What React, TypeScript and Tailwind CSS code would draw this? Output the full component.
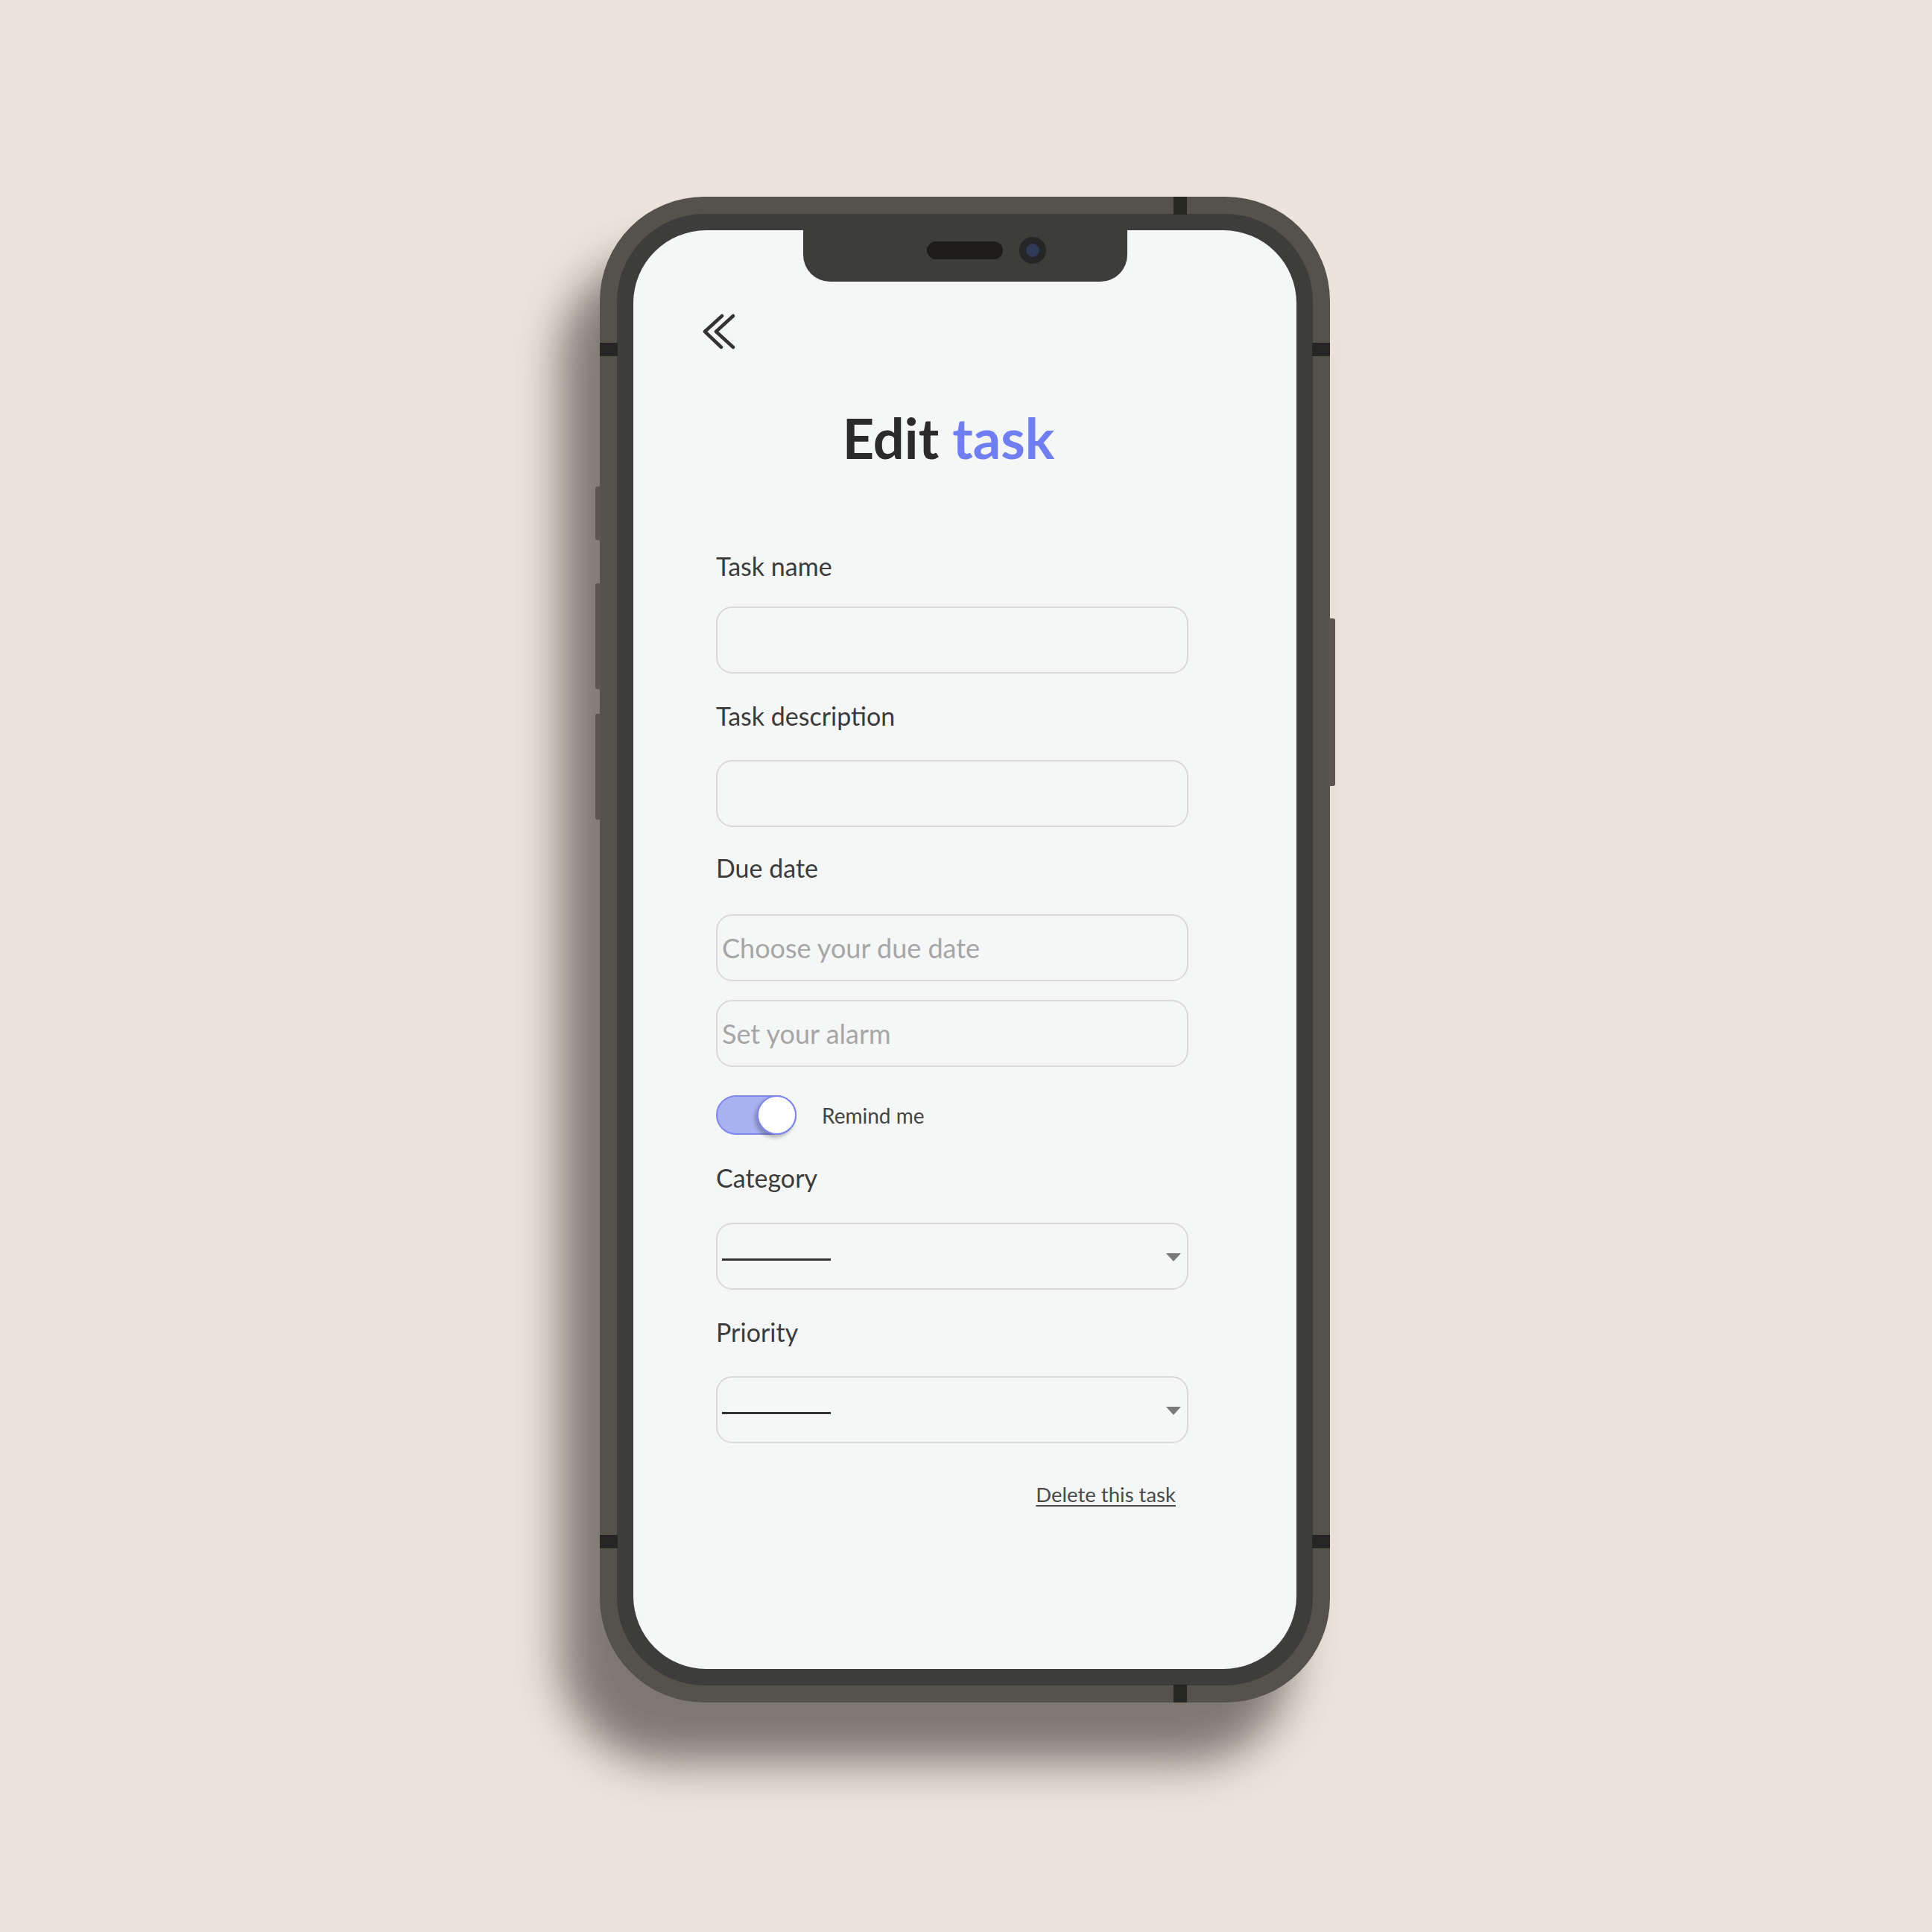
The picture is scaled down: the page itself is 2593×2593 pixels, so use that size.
import React from "react";

const BackIcon = () => (
  <svg width="44" height="48" viewBox="0 0 44 48" fill="none" stroke="#333333" strokeWidth="4.5" strokeLinecap="round" strokeLinejoin="round">
    <path d="M26 3 L3 24 L25 45" />
    <path d="M41 3 L18 24 L41 45" />
  </svg>
);

const Label = ({ children, className = "" }: { children: React.ReactNode; className?: string }) => (
  <div className={`text-[34px] leading-none text-[#3b3b3b] ${className}`}>{children}</div>
);

const TextInput = ({ placeholder = "", className = "" }: { placeholder?: string; className?: string }) => (
  <input
    placeholder={placeholder}
    className={`h-[90px] w-[634px] rounded-[22px] border-2 border-[#d9d9d9] bg-transparent px-[6px] text-[36px] text-[#333] outline-none placeholder:text-[#a6a6a6] ${className}`}
  />
);

const SelectBox = ({ className = "" }: { className?: string }) => (
  <div className={`flex h-[90px] w-[634px] items-center justify-between rounded-[22px] border-2 border-[#d9d9d9] pl-[6px] pr-[8px] ${className}`}>
    <div className="mt-[9px] h-[3px] w-[146px] bg-[#333]" />
    <svg width="20" height="11" viewBox="0 0 20 11" className="mt-[3px]">
      <path d="M0 0 H20 L10 11 Z" fill="#7a7a7a" />
    </svg>
  </div>
);

const Phone = () => (
  <div className="relative h-[2021px] w-[980px] rounded-[140px] bg-[#55514b] p-[23px] shadow-[-52px_80px_60px_rgba(60,55,50,0.62)]">
    {/* side buttons */}
    <div className="absolute left-[-6px] top-[389px] h-[72px] w-[7px] rounded-l-[3px] bg-[#5b5650]" />
    <div className="absolute left-[-6px] top-[519px] h-[142px] w-[7px] rounded-l-[3px] bg-[#5b5650]" />
    <div className="absolute left-[-6px] top-[694px] h-[142px] w-[7px] rounded-l-[3px] bg-[#5b5650]" />
    <div className="absolute right-[-7px] top-[566px] h-[225px] w-[8px] rounded-r-[3px] bg-[#5b5650]" />
    {/* antenna lines */}
    <div className="absolute left-[770px] top-0 h-[24px] w-[18px] bg-[#262624]" />
    <div className="absolute bottom-0 left-[770px] h-[24px] w-[18px] bg-[#262624]" />
    <div className="absolute left-0 top-[196px] h-[18px] w-[24px] bg-[#262624]" />
    <div className="absolute right-0 top-[196px] h-[18px] w-[24px] bg-[#262624]" />
    <div className="absolute left-0 top-[1796px] h-[18px] w-[24px] bg-[#262624]" />
    <div className="absolute right-0 top-[1796px] h-[18px] w-[24px] bg-[#262624]" />

    <div className="h-full w-full rounded-[118px] bg-[#3d3d3b] p-[22px]">
      <div className="relative flex h-full w-full flex-col overflow-hidden rounded-[98px] bg-[#f5f6f6] pl-[111px] pt-[112px]">
        {/* notch */}
        <div className="absolute left-[228px] top-0 flex h-[69px] w-[435px] rounded-b-[36px] bg-[#3d3d3b]">
          <div className="flex h-[54px] items-center pl-[166px]">
            <div className="h-[24px] w-[102px] rounded-full bg-[#1f1d1b]" />
            <div className="ml-[22px] flex h-[36px] w-[36px] items-center justify-center rounded-full bg-[#262626]">
              <div className="h-[18px] w-[18px] rounded-full bg-[#2f3a56]" />
            </div>
          </div>
        </div>

        <div className="-ml-[18px]">
          <BackIcon />
        </div>

        <h1 className="mt-[82px] w-[624px] text-center text-[74px] font-bold leading-none text-[#2b2b2b]">
          Edit <span className="text-[#6f7ef0]">task</span>
        </h1>

        <Label className="mt-[118px]">Task name</Label>
        <TextInput className="mt-[37px]" />

        <Label className="mt-[40px]">Task description</Label>
        <TextInput className="mt-[42px]" />

        <Label className="mt-[38px]">Due date</Label>
        <TextInput className="mt-[45px]" placeholder="Choose your due date" />
        <TextInput className="mt-[25px]" placeholder="Set your alarm" />

        <div className="mt-[38px] flex items-center">
          <div className="relative h-[53px] w-[108px] rounded-full border-2 border-[#7d88ee] bg-[#a9b2f1]">
            <div className="absolute right-[-2px] top-[-2px] h-[53px] w-[53px] rounded-full border-2 border-[#7d88ee] bg-white shadow-[-3px_4px_5px_rgba(0,0,0,0.25)]" />
          </div>
          <span className="ml-[34px] text-[28px] leading-none text-[#444]">Remind me</span>
        </div>

        <Label className="mt-[41px]">Category</Label>
        <SelectBox className="mt-[43px]" />

        <Label className="mt-[40px]">Priority</Label>
        <SelectBox className="mt-[42px]" />

        <div className="mt-[55px] flex w-[634px] justify-end pr-[17px]">
          <a className="text-[27.5px] leading-none text-[#4a4a4a] underline underline-offset-[4px]">Delete this task</a>
        </div>
      </div>
    </div>
  </div>
);

export default function App() {
  return (
    <div className="min-h-[2593px] w-[2593px] bg-[#ebe3dc] pl-[805px] pt-[264px] font-['Lato',sans-serif]">
      <Phone />
    </div>
  );
}
